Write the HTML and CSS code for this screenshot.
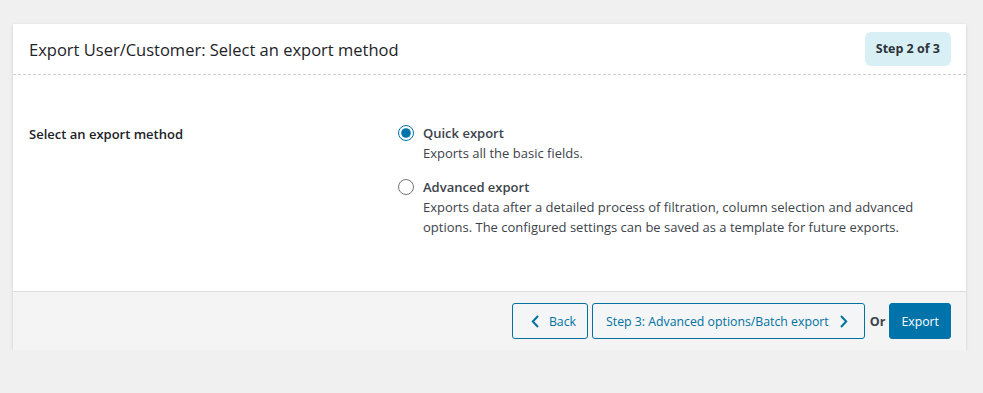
FILE: index.html
```html
<!DOCTYPE html>
<html lang="en">
<head>
<meta charset="UTF-8">
<meta name="viewport" content="width=device-width, initial-scale=1.0">
<title>Export User/Customer</title>
<link rel="stylesheet" href="styles.css">
</head>
<body>
    <!-- export wizard card -->
    <div class="panel">
        <div class="panel-head">
            <h2>Export User/Customer: Select an export method</h2>
            <span class="step-badge">Step 2 of 3</span>
        </div>

        <div class="panel-body">
            <div class="field-label">Select an export method</div>
            <div class="methods">
                <label class="method">
                    <input type="radio" name="method" checked>
                    <span class="method-text">
                        <strong>Quick export</strong>
                        <span class="method-desc">Exports all the basic fields.</span>
                    </span>
                </label>
                <label class="method">
                    <input type="radio" name="method">
                    <span class="method-text">
                        <strong>Advanced export</strong>
                        <span class="method-desc">Exports data after a detailed process of filtration, column selection and advanced options. The configured settings can be saved as a template for future exports.</span>
                    </span>
                </label>
            </div>
        </div>

        <div class="panel-foot">
            <button class="btn btn-outline btn-back">
                <svg width="8" height="13" viewBox="0 0 8 13"><path d="M7 1 L1.8 6.5 L7 12" fill="none" stroke="currentColor" stroke-width="2"/></svg>
                Back
            </button>
            <button class="btn btn-outline btn-next">
                Step 3: Advanced options/Batch export
                <svg width="8" height="13" viewBox="0 0 8 13"><path d="M1 1 L6.2 6.5 L1 12" fill="none" stroke="currentColor" stroke-width="2"/></svg>
            </button>
            <span class="or">Or</span>
            <button class="btn btn-primary">Export</button>
        </div>
    </div>
</body>
</html>
```

FILE: styles.css
```css
body {
    margin: 0;
    background: #f0f0f1;
    font-family: "Open Sans", "Noto Sans", sans-serif;
    font-size: 13px;
    color: #3c434a;
}

.panel {
    margin: 24px 17px 0 13px;
    background: #fff;
    box-shadow: 0 1px 3px rgba(0, 0, 0, 0.15);
}

.panel-head {
    display: flex;
    align-items: center;
    justify-content: space-between;
    height: 50px;
    padding: 0 15px 0 16px;
    border-bottom: 1px dashed #d0d0d0;
}

.panel-head h2 {
    margin: 0;
    font-size: 16.5px;
    font-weight: 400;
    color: #1d2327;
}

.step-badge {
    background: #d8eff5;
    border-radius: 6px;
    padding: 8px 11px;
    line-height: 18px;
    font-size: 12.5px;
    font-weight: 700;
    color: #2c3338;
}

.panel-body {
    display: flex;
    padding: 48px 16px 54px 16px;
}

.field-label {
    width: 369px;
    line-height: 20px;
    padding-top: 1px;
    font-weight: 600;
    color: #1d2327;
}

.methods {
    display: flex;
    flex-direction: column;
    gap: 14px;
    flex: 1;
}

.method {
    display: flex;
    gap: 9px;
    line-height: 20px;
}

.method input {
    margin: 2px 0 0 0;
    width: 16px;
    height: 16px;
    accent-color: #0073aa;
}

.method-text {
    display: flex;
    flex-direction: column;
    max-width: 505px;
}

.method-text strong {
    color: #3c434a;
    font-weight: 600;
}

.panel-foot {
    display: flex;
    justify-content: flex-end;
    align-items: center;
    gap: 4px;
    padding: 11px 15px 11px;
    background: #f4f4f4;
    border-top: 1px solid #dcdcde;
}

.btn {
    display: inline-flex;
    align-items: center;
    height: 36px;
    padding: 0 11px;
    border-radius: 3px;
    font: inherit;
    font-size: 12.3px;
    cursor: pointer;
}

.btn-outline {
    background: #f3f5f6;
    border: 1px solid #0071a1;
    color: #0071a1;
}

.btn-back {
    gap: 10px;
    padding: 0 11px 0 18px;
}

.btn-next {
    gap: 11px;
    padding: 0 16px 0 13px;
}

.btn-primary {
    background: #0073aa;
    border: 1px solid #0073aa;
    color: #fff;
}

.or {
    font-weight: 700;
    font-size: 12.5px;
    color: #3c434a;
    margin-left: 1px;
}
```
